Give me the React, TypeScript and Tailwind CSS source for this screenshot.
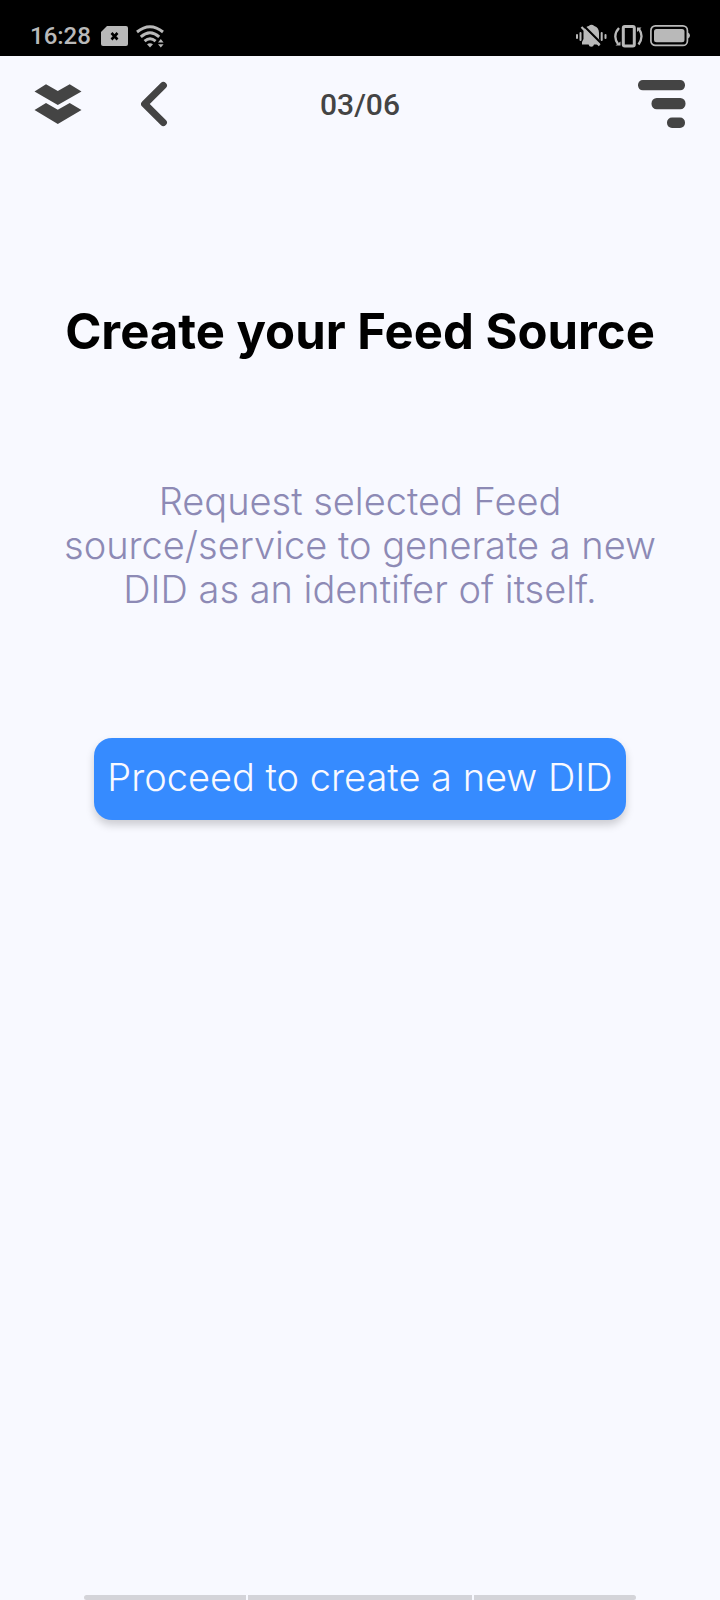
function NoSimIcon() {
  return (
    <svg width="27" height="20" viewBox="0 0 27 20" aria-hidden="true">
      <path d="M6 0H25Q27 0 27 2V18Q27 20 25 20H2Q0 20 0 18V6Z" fill="#b9b9b9" />
      <path d="M10.5 7L16.5 13.5M16.5 7L10.5 13.5" stroke="#000" strokeWidth="2.6" />
    </svg>
  );
}

function WifiIcon() {
  return (
    <svg width="29" height="23" viewBox="0 0 29 23" aria-hidden="true">
      <g fill="none" stroke="#b9b9b9" strokeWidth="2.9">
        <path d="M1 7Q14 -3.5 27 7" />
        <path d="M4.8 11.8Q14 3.6 23.2 11.8" />
        <path d="M8.6 16.2Q14 11.4 19.6 16.2" />
      </g>
      <path d="M11 19.3Q14 17.3 17 19.3L14 22.5Z" fill="#b9b9b9" />
      <path d="M22 17.6L24.8 14L27.6 17.6ZM22 19.2H27.6L24.8 22.6Z" fill="#b9b9b9" />
    </svg>
  );
}

function MutedBellIcon() {
  return (
    <svg width="31" height="24" viewBox="0 0 31 24" aria-hidden="true">
      <g stroke="#b9b9b9" strokeWidth="2" strokeLinecap="round">
        <path d="M1 11V14M4.5 9V16M25.7 9V16M29.5 11V14" />
      </g>
      <path
        d="M7.5 7.5C8 3.5 11 2.5 12.7 2Q15.5 -0.5 18.3 2C21.5 3 23 5.5 23 9V15L24.5 18V20.5H18Q17.5 22.8 15.3 22.8Q13 22.8 12.6 20.5H6V18L7.5 15Z"
        fill="#b9b9b9"
      />
      <path d="M7.5 1.5L26 20" stroke="#000" strokeWidth="2.2" />
      <path d="M5.5 3L23.5 21.5" stroke="#b9b9b9" strokeWidth="2.2" />
    </svg>
  );
}

function VibrateIcon() {
  return (
    <svg width="29" height="23" viewBox="0 0 29 23" aria-hidden="true">
      <g fill="none" stroke="#b9b9b9">
        <rect x="9.3" y="1.5" width="11" height="19.5" rx="1.5" strokeWidth="3" />
        <path d="M5 3C0.5 8 0.5 14 4 19" strokeWidth="2.3" />
        <path d="M24.5 19.5C28.5 14 28.5 9 25 4" strokeWidth="2.3" />
      </g>
      <path d="M1.5 20.5L6.5 16.5V20.5ZM23 2.5H27.5L23 7Z" fill="#b9b9b9" />
    </svg>
  );
}

function BatteryIcon() {
  return (
    <svg width="40" height="22" viewBox="0 0 40 22" aria-hidden="true">
      <rect x="0.9" y="0.9" width="36.5" height="19.5" rx="4.5" fill="none" stroke="#b9b9b9" strokeWidth="1.7" />
      <rect x="4" y="4" width="30.5" height="13.3" rx="2.5" fill="#b9b9b9" />
      <path d="M38 7.5Q40 8.5 40 10.5Q40 12.5 38 13.5Z" fill="#b9b9b9" />
    </svg>
  );
}

function StatusBar() {
  return (
    <div className="flex h-14 items-end justify-between bg-black px-[30px] pb-[6px] text-[#b9b9b9]">
      <div className="flex items-center gap-2">
        <span className="w-[63px] text-2xl leading-7 font-medium">16:28</span>
        <NoSimIcon />
        <WifiIcon />
      </div>
      <div className="flex h-7 items-center gap-[7px]">
        <MutedBellIcon />
        <VibrateIcon />
        <BatteryIcon />
      </div>
    </div>
  );
}

function Header() {
  return (
    <header className="grid h-24 grid-cols-[1fr_auto_1fr] items-center px-[34px] text-[#444]">
      <div className="flex items-center gap-[59px]">
        <button type="button" aria-label="Home">
          <svg className="block" width="48" height="40" viewBox="0 0 48 40" fill="currentColor" aria-hidden="true">
            <path d="M0.5 7.5L12 0.3L23.8 7L35.7 0.3L47.5 7.5L23.8 21Z" />
            <path d="M0.5 26L12 19L23.8 25.7L35.7 19L47.5 26L23.8 40Z" />
          </svg>
        </button>
        <button type="button" aria-label="Back">
          <svg className="block" width="27" height="46" viewBox="0 0 27 46" fill="none" stroke="currentColor" aria-hidden="true">
            <path d="M22.3 4.5L3.7 23L22.3 41.5" strokeWidth="7.2" strokeLinecap="round" strokeLinejoin="round" />
          </svg>
        </button>
      </div>
      <span className="pt-[2px] text-3xl font-medium">03/06</span>
      <button type="button" aria-label="Menu" className="justify-self-end">
        <svg className="block" width="48" height="48" viewBox="0 0 48 48" fill="currentColor" aria-hidden="true">
          <rect x="0" y="0" width="47" height="10.3" rx="4.8" />
          <rect x="13.5" y="18" width="34" height="11.3" rx="5.2" />
          <rect x="29" y="37.5" width="18" height="10.5" rx="5" />
        </svg>
      </button>
    </header>
  );
}

export default function App() {
  return (
    <div className="flex min-h-screen flex-col bg-[#f8f9ff] font-[Roboto,sans-serif]">
      <StatusBar />
      <Header />
      <main className="flex flex-1 flex-col items-center px-12 pt-[152px] text-center font-[Inter,sans-serif]">
        <h1 className="text-[49px] leading-14 font-bold text-black">Create your Feed Source</h1>
        <p className="mt-[119px] text-[38px] leading-11 font-light text-[#8d8ab5]">
          Request selected Feed source/service to generate a new DID as an identifer of itself.
        </p>
        <button
          type="button"
          className="mt-[127px] h-[82px] w-full max-w-[532px] rounded-[18px] bg-[#368bff] pb-1 text-[38px] font-light whitespace-nowrap text-[#f8f9ff] shadow-[0_5px_8px_rgba(0,0,0,0.18)]"
        >
          Proceed to create a new DID
        </button>
      </main>
      <div className="mx-[84px] flex h-[5px] gap-[2px] overflow-hidden rounded-[3px]">
        <div className="flex-[162] bg-[#d4d4d9]" />
        <div className="flex-[224] bg-[#d4d4d9]" />
        <div className="flex-[162] bg-[#d4d4d9]" />
      </div>
    </div>
  );
}
